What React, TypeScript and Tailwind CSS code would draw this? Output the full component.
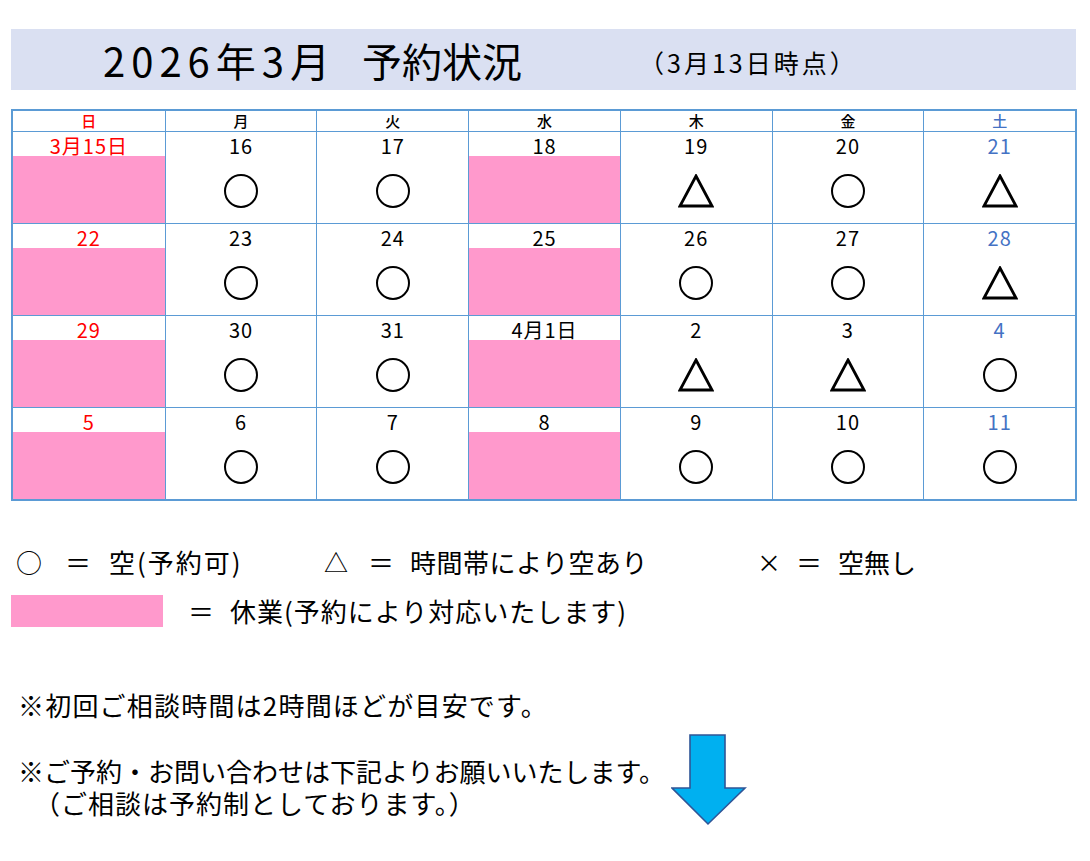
import React from "react";

type Cell = { d: string; s: "o" | "t" | "c" | null };

const rows: Cell[][] = [
  [
    { d: "3月15日", s: "c" },
    { d: "16", s: "o" },
    { d: "17", s: "o" },
    { d: "18", s: "c" },
    { d: "19", s: "t" },
    { d: "20", s: "o" },
    { d: "21", s: "t" },
  ],
  [
    { d: "22", s: "c" },
    { d: "23", s: "o" },
    { d: "24", s: "o" },
    { d: "25", s: "c" },
    { d: "26", s: "o" },
    { d: "27", s: "o" },
    { d: "28", s: "t" },
  ],
  [
    { d: "29", s: "c" },
    { d: "30", s: "o" },
    { d: "31", s: "o" },
    { d: "4月1日", s: "c" },
    { d: "2", s: "t" },
    { d: "3", s: "t" },
    { d: "4", s: "o" },
  ],
  [
    { d: "5", s: "c" },
    { d: "6", s: "o" },
    { d: "7", s: "o" },
    { d: "8", s: "c" },
    { d: "9", s: "o" },
    { d: "10", s: "o" },
    { d: "11", s: "o" },
  ],
];

const days = ["日", "月", "火", "水", "木", "金", "土"];

function Circle() {
  return <div className="w-[34px] h-[34px] rounded-full border-[2.8px] border-black" />;
}

function Tri() {
  return (
    <svg width="36" height="34" viewBox="0 0 36 34">
      <polygon points="18,2 34,32 2,32" fill="none" stroke="#000" strokeWidth="2.8" strokeLinejoin="miter" />
    </svg>
  );
}

function colorFor(i: number) {
  if (i === 0) return "text-[#ff0000]";
  if (i === 6) return "text-[#4472c4]";
  return "text-black";
}

export default function App() {
  return (
    <div className="w-[1090px] h-[861px] bg-white text-black font-['Noto_Sans_CJK_JP',sans-serif] overflow-hidden">
      <div className="pt-[29px] pl-[11px]">
        <div className="w-[1065px] h-[61px] bg-[#dae0f2] flex items-center">
          <span className="ml-[92px] w-[259px] text-[40px] leading-none tracking-[6px] whitespace-nowrap">2026年3月</span>
          <span className="w-[160px] text-[40px] leading-none whitespace-nowrap">予約状況</span>
          <span className="ml-[117px] mt-[6px] text-[25px] leading-none tracking-[3px] whitespace-nowrap">（3月13日時点）</span>
        </div>

        <div className="mt-[19px] w-[1066px] border-2 border-[#5b9bd5] grid grid-cols-7">
          {days.map((d, i) => (
            <div
              key={d}
              className={`h-[20px] flex items-center justify-center text-[15px] leading-[16px] font-medium ${colorFor(i)} ${i > 0 ? "border-l border-[#5b9bd5]" : ""}`}
            >
              {d}
            </div>
          ))}
          {rows.map((row, r) =>
            row.map((c, i) => (
              <div
                key={`${r}-${i}`}
                className={`h-[92px] flex flex-col border-t border-[#5b9bd5] ${i > 0 ? "border-l" : ""}`}
              >
                <div className={`h-[24px] flex items-end justify-center text-[20px] leading-[20px] tracking-[1px] ${colorFor(i)}`}>
                  {c.d}
                </div>
                {c.s === "c" ? (
                  <div className="flex-1 bg-[#ff99cc]" />
                ) : (
                  <div className="flex-1 flex items-start justify-center pt-[18px]">
                    {c.s === "o" ? <Circle /> : <Tri />}
                  </div>
                )}
              </div>
            ))
          )}
        </div>

        <div className="mt-[48px] flex items-center text-[26px] leading-none whitespace-nowrap">
          <span className="ml-[5px] w-[36px]">○</span>
          <span className="ml-[6px] w-[40px] text-center">＝</span>
          <span className="ml-[11px] w-[215px] tracking-[2px]">空(予約可)</span>
          <span className="w-[26px] text-[24px]">△</span>
          <span className="ml-[11px] w-[40px] text-center">＝</span>
          <span className="ml-[9px] w-[347px] tracking-[0.5px]">時間帯により空あり</span>
          <span className="w-[26px] text-[24px]">×</span>
          <span className="ml-[4px] w-[44px] text-center">＝</span>
          <span className="ml-[7px]">空無し</span>
        </div>

        <div className="mt-[20px] flex items-center text-[26px] leading-none whitespace-nowrap">
          <div className="w-[152px] h-[32px] bg-[#ff99cc]" />
          <span className="ml-[18px] w-[40px] text-center">＝</span>
          <span className="ml-[9px] tracking-[1px]">休業(予約により対応いたします)</span>
        </div>

        <div className="mt-[62px] flex">
          <div className="w-[660px] pl-[7px] text-[26px] leading-[32px] whitespace-nowrap">
            <div className="tracking-[1.2px]">※初回ご相談時間は2時間ほどが目安です。</div>
            <div className="mt-[34px]">※ご予約・お問い合わせは下記よりお願いいたします。</div>
            <div className="pl-[16px] tracking-[1px]">（ご相談は予約制としております。）</div>
          </div>
          <svg width="76" height="92" viewBox="0 0 76 92" className="mt-[45px]">
            <polygon
              points="19,1 54,1 54,54 74,54 37,90 1,54 19,54"
              fill="#00b0f0"
              stroke="#2f5597"
              strokeWidth="1.6"
              strokeLinejoin="miter"
            />
          </svg>
        </div>
      </div>
    </div>
  );
}
